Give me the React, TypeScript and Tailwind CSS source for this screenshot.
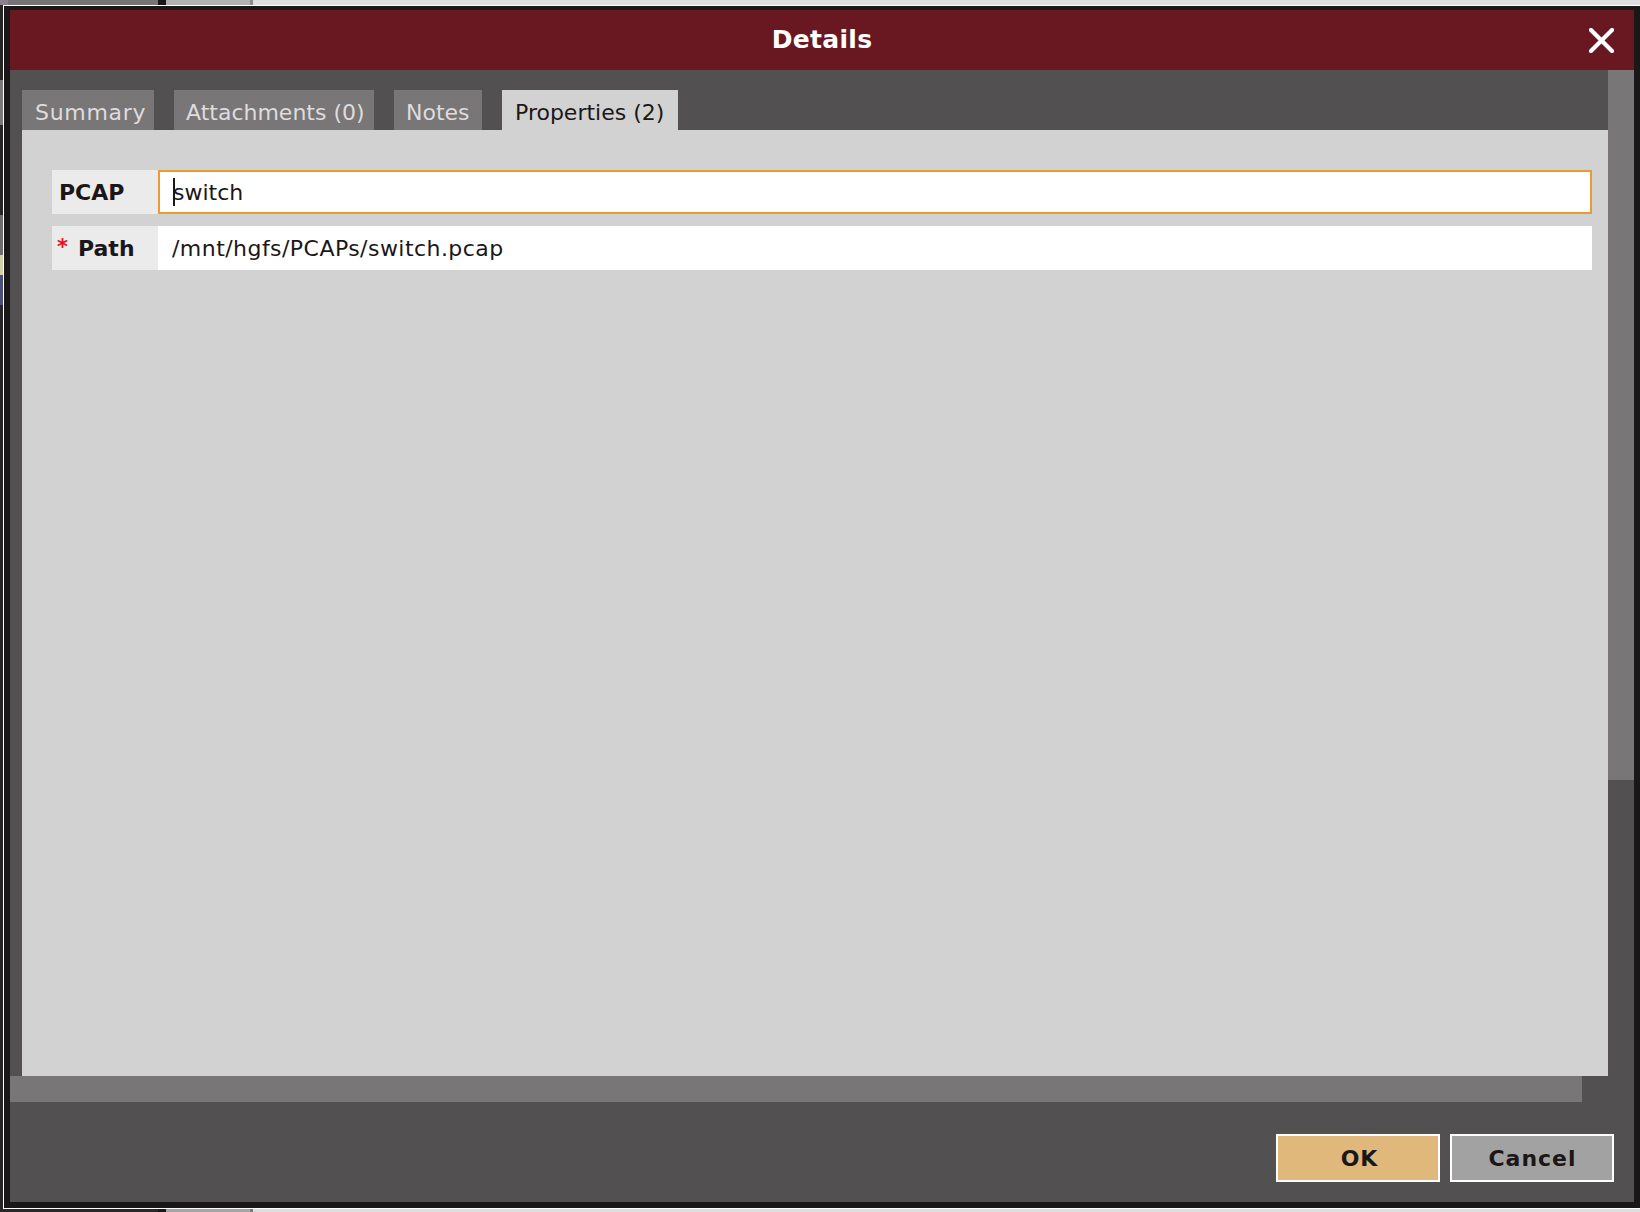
import React from "react";

const font = { fontFamily: '"DejaVu Sans", "Liberation Sans", sans-serif' };

function Tab({ label, active, extra }: { label: string; active?: boolean; extra: string }) {
  return (
    <div
      className={
        "h-[40px] shrink-0 flex items-center pl-[12px] pt-[5px] text-[22px] leading-none whitespace-nowrap " +
        (active ? "bg-[#d2d2d2] text-[#1b1718]" : "bg-[#787677] text-[#dedcdd]") +
        " " +
        extra
      }
    >
      {label}
    </div>
  );
}

export default function App() {
  return (
    <div className="w-[1640px] h-[1212px] flex flex-col overflow-hidden bg-[#dfdede]" style={font}>
      {/* top strip: whatever lies behind the dialog */}
      <div className="h-[5px] flex shrink-0">
        <div className="w-[8px] bg-[#8a8090]" />
        <div className="w-[150px] bg-[#767475]" />
        <div className="w-[8px] bg-[#1a1718]" />
        <div className="w-[84px] bg-[#b2b1b1]" />
        <div className="w-[3px] bg-[#8c8b8b]" />
        <div className="flex-1 bg-[#dfdede]" />
      </div>

      <div className="h-[1204px] flex shrink-0">
        {/* left strip */}
        <div className="w-[3px] flex flex-col bg-[#262425]">
          <div className="h-[75px]" />
          <div className="h-[45px] bg-[#7a7879]" />
          <div className="h-[90px]" />
          <div className="h-[40px] bg-[#6f6d6e]" />
          <div className="h-[20px] bg-[#cfcfa8]" />
          <div className="h-[30px] bg-[#4a4f7a]" />
          <div className="flex-1" />
        </div>

        {/* dialog frame */}
        <div className="flex-1 border-t border-l border-b border-white bg-[#1a1718] pt-[4px] pl-[6px] pr-[6px] pb-[6px] flex flex-col">
          <div className="flex-1 flex flex-col">
            {/* header */}
            <div className="h-[60px] bg-[#691822] relative flex items-center justify-center shrink-0">
              <span className="text-white font-bold text-[25px] leading-none tracking-[0.3px] pb-[1px]">Details</span>
              <svg
                className="absolute right-[20px] top-[18px]"
                width="25"
                height="25"
                viewBox="0 0 25 25"
              >
                <path d="M2 2 L23 23 M23 2 L2 23" stroke="white" strokeWidth="4.2" strokeLinecap="square" />
              </svg>
            </div>

            {/* scroll area */}
            <div className="h-[1032px] flex shrink-0">
              <div className="flex-1 flex flex-col">
                <div className="flex-1 bg-[#525051] pl-[12px] pt-[20px] flex flex-col">
                  <div className="flex gap-[20px] h-[40px] shrink-0">
                    <Tab label="Summary" extra="w-[132px] pl-[13px] tracking-[0.7px]" />
                    <Tab label="Attachments (0)" extra="w-[200px]" />
                    <Tab label="Notes" extra="w-[88px]" />
                    <Tab label="Properties (2)" active extra="w-[176px] pl-[13px]" />
                  </div>
                  <div className="flex-1 bg-[#d2d2d2] pl-[30px] pr-[16px] pt-[40px] flex flex-col gap-[12px]">
                    <div className="h-[44px] flex">
                      <div className="w-[106px] bg-[#ebebeb] flex items-center pl-[7px] text-[22px] font-bold text-[#1b1718]">
                        PCAP
                      </div>
                      <div className="flex-1 bg-white border-2 border-[#e89c31] flex items-center pl-[13px] text-[22px] text-[#1b1718]">
                        <span className="inline-block w-[2px] h-[28px] bg-[#1b1718] mr-[-2px]" />
                        <span>switch</span>
                      </div>
                    </div>
                    <div className="h-[44px] flex">
                      <div className="w-[106px] bg-[#ebebeb] flex items-center pl-[5px] text-[22px] font-bold text-[#1b1718]">
                        <span className="text-[#e8101e] text-[21px] font-bold mr-[10px]">*</span>
                        Path
                      </div>
                      <div className="flex-1 bg-white flex items-center pl-[14px] text-[22px] text-[#1b1718] tracking-[0.45px]">
                        /mnt/hgfs/PCAPs/switch.pcap
                      </div>
                    </div>
                  </div>
                </div>
                {/* horizontal scrollbar */}
                <div className="h-[26px] flex bg-[#525051] shrink-0">
                  <div className="w-[1572px] bg-[#787677]" />
                </div>
              </div>
              {/* vertical scrollbar */}
              <div className="w-[26px] flex flex-col bg-[#525051]">
                <div className="h-[710px] bg-[#787677]" />
              </div>
            </div>

            {/* button bar */}
            <div className="flex-1 bg-[#525051] flex justify-end items-start pt-[32px] pr-[20px] gap-[10px]">
              <button className="w-[164px] h-[48px] border-2 border-white bg-[#e0b87c] text-[22px] font-bold text-[#1b1718] tracking-[1px] pl-[3px]">
                OK
              </button>
              <button className="w-[164px] h-[48px] border-2 border-white bg-[#a3a2a3] text-[22px] font-bold text-[#1b1718] tracking-[1px] pl-[1px]">
                Cancel
              </button>
            </div>
          </div>
        </div>
      </div>

      {/* bottom strip */}
      <div className="flex-1 flex">
        <div className="w-[158px] bg-[#2a2829]" />
        <div className="w-[8px] bg-[#1a1718]" />
        <div className="w-[84px] bg-[#a6a5a5]" />
        <div className="w-[3px] bg-[#7c7b7b]" />
        <div className="flex-1 bg-[#dfdede]" />
      </div>
    </div>
  );
}
